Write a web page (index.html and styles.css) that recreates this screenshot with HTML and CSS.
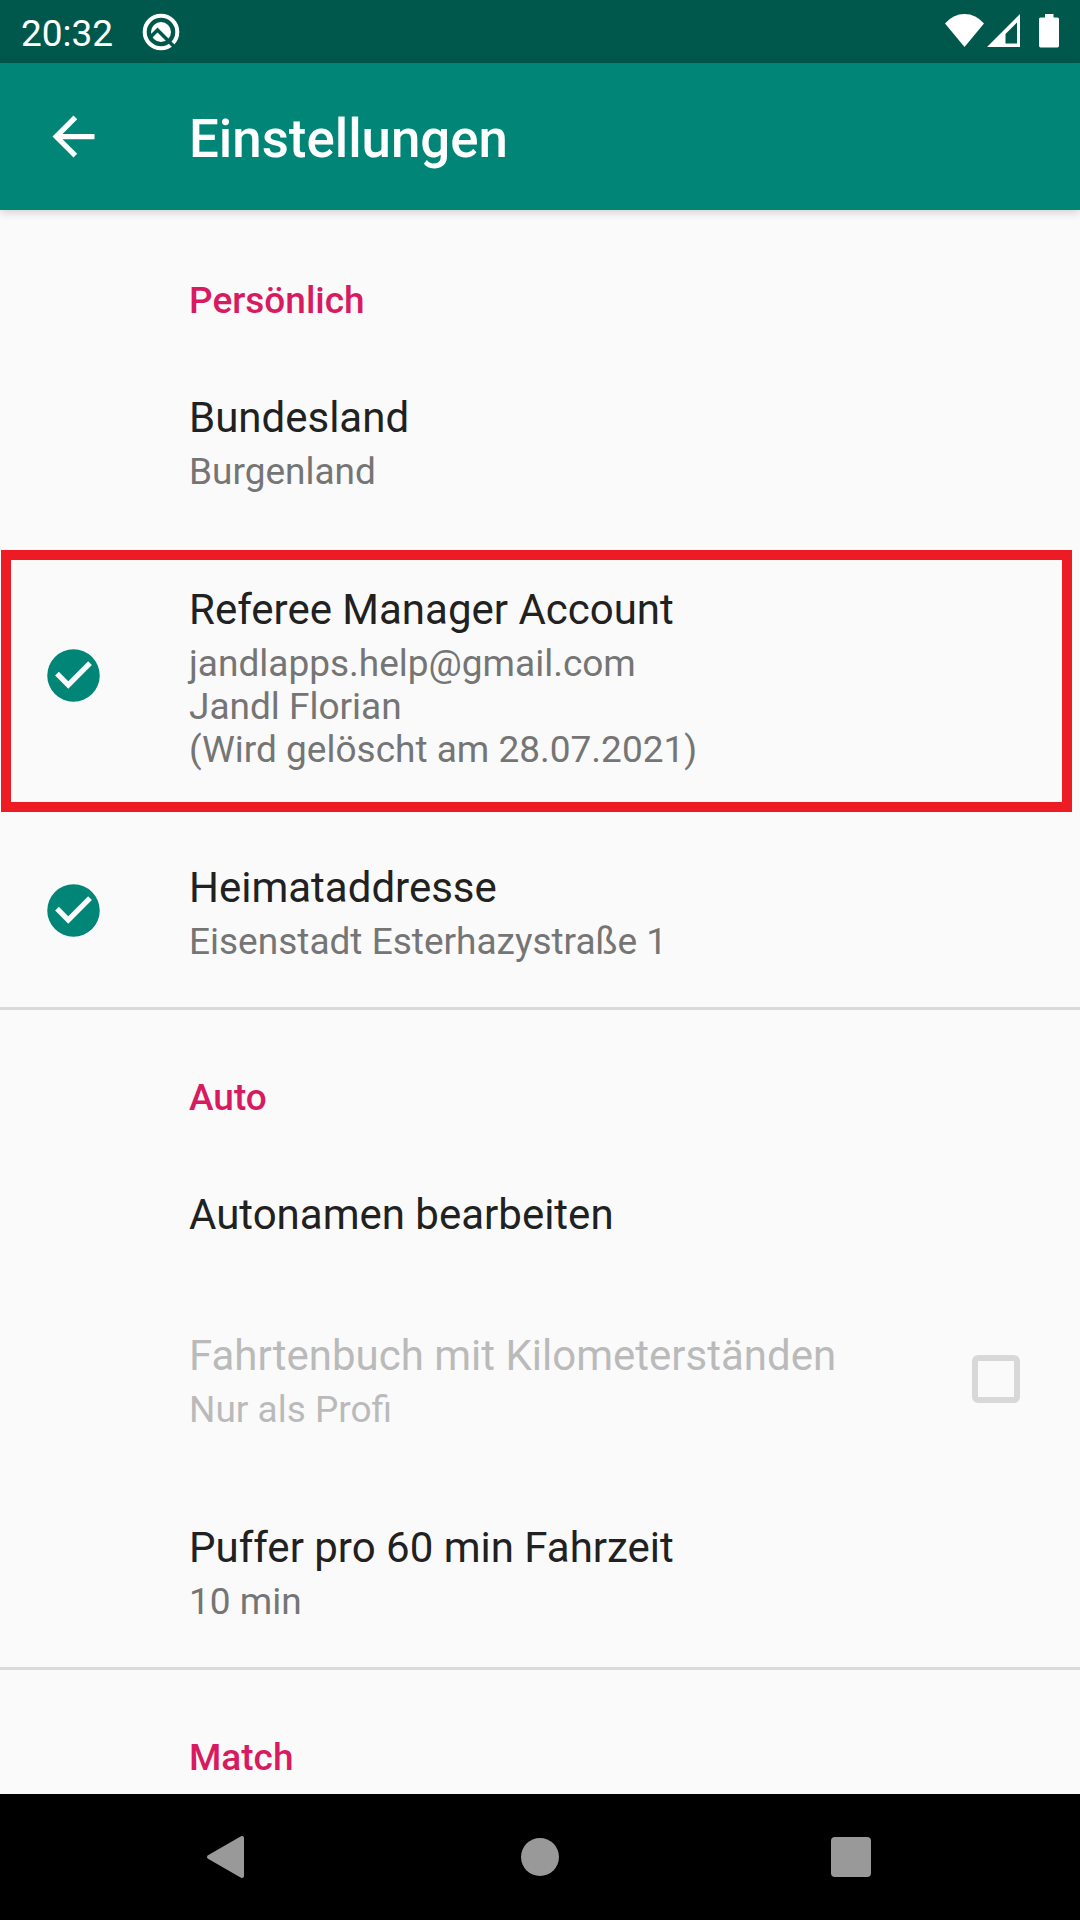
FILE: index.html
```html
<!DOCTYPE html>
<html lang="de">
<head>
<meta charset="utf-8">
<title>Einstellungen</title>
<link rel="stylesheet" href="styles.css">
</head>
<body>
<div class="screen">
  <header class="status">
    <span class="clock">20:32</span>
    <svg class="notification" width="38" height="38" viewBox="0 0 38 38">
      <circle cx="19" cy="19" r="16.300" fill="none" stroke="#fff" stroke-width="4"/>
      <circle cx="19" cy="19" r="10" fill="#fff"/>
      <path d="M8 24.500L15.500 17L34 35.500" fill="none" stroke="#00574b" stroke-width="3.500"/>
    </svg>
    <svg class="signals" width="116" height="36" viewBox="0 0 116 36">
      <path d="M0 10.500Q8 1 19.500 1T39 10.500L19.500 34Z" fill="#fff"/>
      <path fill-rule="evenodd" d="M42 34L75 1V34ZM60.500 30.500H72V9.500L60.500 21Z" fill="#fff"/>
      <path d="M100 1H108.500V4.500H112.500Q114 4.500 114 6V32.500Q114 34.500 112.500 34.500H95.500Q94 34.500 94 32.500V6Q94 4.500 95.500 4.500H100Z" fill="#fff"/>
    </svg>
  </header>
  <div class="toolbar">
    <svg class="back" width="63" height="63" viewBox="0 0 24 24"><path fill="#fff" d="M20 11H7.830l5.590-5.590L12 4l-8 8 8 8 1.410-1.410L7.830 13H20v-2z"/></svg>
    <h1>Einstellungen</h1>
  </div>
  <main class="list">
    <section>
      <h2>Persönlich</h2>
      <div class="row">
        <div class="icon"></div>
        <div class="text"><div class="title">Bundesland</div><div class="summary">Burgenland</div></div>
      </div>
      <div class="row marked">
        <div class="icon"><svg width="63" height="63" viewBox="0 0 24 24"><path fill="#008577" d="M12 2a10 10 0 1 0 0 20 10 10 0 0 0 0-20zm-2 15l-5-5 1.410-1.410L10 14.170l7.590-7.590L19 8l-9 9z"/></svg></div>
        <div class="text"><div class="title">Referee Manager Account</div><div class="summary">jandlapps.help@gmail.com<br>Jandl Florian<br>(Wird gelöscht am 28.07.2021)</div></div>
      </div>
      <div class="row">
        <div class="icon"><svg width="63" height="63" viewBox="0 0 24 24"><path fill="#008577" d="M12 2a10 10 0 1 0 0 20 10 10 0 0 0 0-20zm-2 15l-5-5 1.410-1.410L10 14.170l7.590-7.590L19 8l-9 9z"/></svg></div>
        <div class="text"><div class="title">Heimataddresse</div><div class="summary">Eisenstadt Esterhazystraße 1</div></div>
      </div>
    </section>
    <section>
      <h2>Auto</h2>
      <div class="row">
        <div class="icon"></div>
        <div class="text"><div class="title">Autonamen bearbeiten</div></div>
      </div>
      <div class="row disabled">
        <div class="icon"></div>
        <div class="text"><div class="title">Fahrtenbuch mit Kilometerständen</div><div class="summary">Nur als Profi</div></div>
        <div class="checkbox"></div>
      </div>
      <div class="row">
        <div class="icon"></div>
        <div class="text"><div class="title">Puffer pro 60 min Fahrzeit</div><div class="summary">10 min</div></div>
      </div>
    </section>
    <section>
      <h2>Match</h2>
    </section>
  </main>
  <nav class="navbar">
    <svg width="42" height="44" viewBox="0 0 42 44"><path d="M4 22L37 3V41Z" fill="#999" stroke="#999" stroke-width="4" stroke-linejoin="round"/></svg>
    <svg width="42" height="44" viewBox="0 0 42 44"><circle cx="22" cy="22" r="19" fill="#999"/></svg>
    <svg width="42" height="44" viewBox="0 0 42 44"><rect x="1" y="2" width="40" height="40" rx="4" fill="#999"/></svg>
  </nav>
</div>
</body>
</html>
```
FILE: styles.css
```css
*, *::after { box-sizing: border-box; }
body { margin: 0; font-family: Roboto, sans-serif; background: #fafafa; }
svg { display: block; flex: none; }
.screen { width: 1080px; height: 1920px; display: flex; flex-direction: column; overflow: hidden; }

.status { height: 63px; flex: none; display: flex; align-items: center; padding: 0 19px 0 21px; background: #00574b; color: #fff; }
.clock { font-size: 37px; line-height: 43px; padding-top: 3px; width: 121px; }
.signals { margin: -1px 0 0 auto; }

.toolbar { height: 147px; flex: none; display: flex; align-items: center; padding: 0 42px; background: #008577; box-shadow: 0 2px 9px rgba(0,0,0,.18); z-index: 1; }
.back { margin-top: -1px; }
.toolbar h1 { margin: 4px 0 0 84px; font-size: 52.8px; line-height: 62px; font-weight: 500; color: #fff; }

.list { flex: 1; min-height: 0; overflow: hidden; }
section + section { border-top: 3px solid #dadada; }
h2 { margin: 0; height: 135px; padding: 68px 0 0 189px; font-size: 37px; line-height: 46px; font-weight: 500; color: #d81b60; }
section + section h2 { height: 132px; padding-top: 65px; }
.row { display: flex; align-items: center; padding: 42px; }
.icon { width: 147px; flex: none; }
.icon svg { margin-top: -1px; }
.text { flex: 1; }
.title { font-size: 42px; line-height: 61px; margin-bottom: -4px; color: #212121; white-space: nowrap; }
.summary { padding: 6px 0 2px; font-size: 37px; line-height: 43px; color: #757575; }
.marked { position: relative; }
.marked::after { content: ""; position: absolute; left: 1px; top: 13px; width: 1071px; height: 262px; border: 10px solid #ed1c24; }
.disabled .title, .disabled .summary { color: #bababa; }
.checkbox { width: 48px; height: 48px; margin-right: 18px; border: 6px solid #d8d8d8; border-radius: 6px; }

.navbar { height: 126px; flex: none; display: flex; justify-content: space-between; align-items: center; padding: 0 208px 0 205px; background: #000; }
```
